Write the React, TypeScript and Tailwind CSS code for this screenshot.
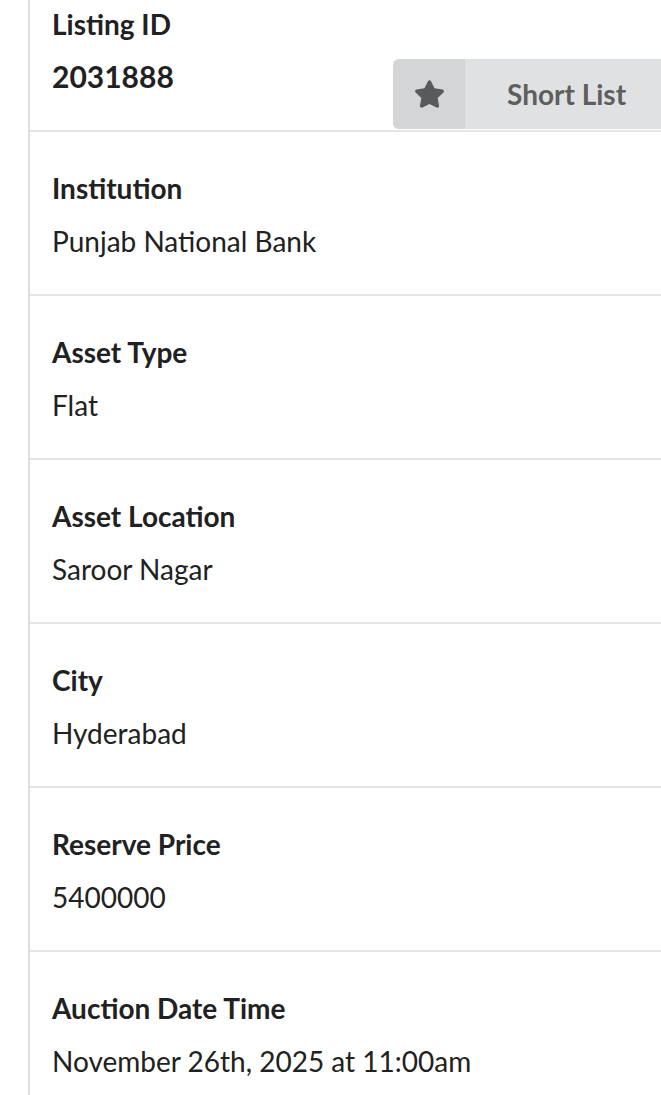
const rows = [
  { label: "Institution", value: "Punjab National Bank" },
  { label: "Asset Type", value: "Flat" },
  { label: "Asset Location", value: "Saroor Nagar" },
  { label: "City", value: "Hyderabad" },
  { label: "Reserve Price", value: "5400000" },
  { label: "Auction Date Time", value: "November 26th, 2025 at 11:00am" },
];

function Star() {
  return (
    <svg width="31" height="28" viewBox="0 0 576 512" fill="#5a5a5a">
      <path d="M259.3 17.8L194 150.2 47.9 171.5c-26.2 3.8-36.7 36.1-17.7 54.6l105.7 103-25 145.5c-4.5 26.3 23.2 46 46.4 33.7L288 439.6l130.7 68.7c23.2 12.2 50.9-7.4 46.4-33.7l-25-145.5 105.7-103c19-18.5 8.5-50.8-17.7-54.6L382 150.2 316.7 17.8c-11.7-23.6-45.6-23.9-57.4 0z" />
    </svg>
  );
}

export default function App() {
  return (
    <div className="min-h-[1095px] bg-white overflow-hidden text-[#212121] font-['Lato','Noto_Sans',sans-serif]">
      <div className="ml-[28px] border-l-2 border-[#dedede] -mt-[32px]">
        <div className="flex justify-between border-b-2 border-[#e6e6e6] h-[164px]">
          <div className="pl-[22px] pt-[39px]">
            <div className="text-[28px] font-bold leading-[34px]">Listing ID</div>
            <div className="mt-[18px] text-[30px] font-bold leading-[34px]">2031888</div>
          </div>
          <button className="self-end flex h-[70px] w-[276px] shrink-0 -mr-[8px] mb-[1px] rounded-l-[6px] bg-[#e0e1e2] overflow-hidden">
            <span className="flex w-[72px] h-full items-center justify-center bg-[#d4d5d6]">
              <Star />
            </span>
            <span className="flex-1 flex items-center pl-[42px] text-[28px] font-bold text-[#5e5e5e]">Short List</span>
          </button>
        </div>
        {rows.map((r) => (
          <div key={r.label} className="border-b-2 border-[#e6e6e6] h-[164px] pl-[22px] pt-[39px]">
            <div className="text-[28px] font-bold leading-[34px]">{r.label}</div>
            <div className="mt-[19px] text-[28px] leading-[34px]">{r.value}</div>
          </div>
        ))}
      </div>
    </div>
  );
}
